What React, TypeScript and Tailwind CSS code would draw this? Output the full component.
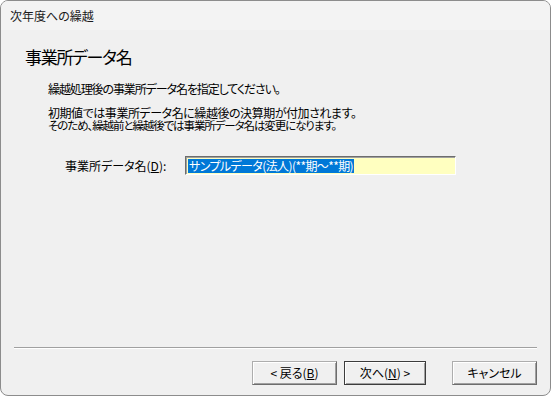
import React from "react";

const font = { fontFamily: '"Noto Sans CJK JP", "Noto Sans", sans-serif' };

function Btn({ children, def }: { children: React.ReactNode; def?: boolean }) {
  return (
    <div
      className={
        "flex h-[24px] items-center justify-center bg-[#f0f0f0] text-[12px] text-black " +
        (def
          ? "w-[82px] border border-[#3c3c3c] shadow-[inset_1px_1px_0_#ffffff,inset_-1px_-1px_0_#a0a0a0]"
          : "w-[85px] border border-[#adadad] border-b-[#6d6d6d] border-r-[#6d6d6d] shadow-[inset_1px_1px_0_#ffffff,inset_-1px_-1px_0_#a0a0a0]")
      }
    >
      {children}
    </div>
  );
}

export default function App() {
  return (
    <div className="w-[551px] h-[396px] bg-white" style={{ ...font, fontFeatureSettings: '"palt"' }}>
      <div className="flex h-full w-full flex-col overflow-hidden rounded-[8px] border border-[#8c8c8c] bg-[#f0f0f0]">
        <div className="flex h-[29px] items-center bg-[#f3f3f3] pl-[9px] text-[12px] text-[#1a1a1a]">
          次年度への繰越
        </div>
        <div className="flex flex-1 flex-col">
          <div className="pl-[24px] pt-[13px] text-[17px] leading-[28px] tracking-[-1.3px] text-black">事業所データ名</div>
          <div className="pl-[47px] pt-[11px] text-[12px] leading-[13px] tracking-[-1.1px] text-black">
            繰越処理後の事業所データ名を指定してください。
          </div>
          <div className="pl-[47px] pt-[12px] text-[12px] leading-[12px] text-black">
            <div className="tracking-[-0.45px]">初期値では事業所データ名に繰越後の決算期が付加されます。</div>
            <div className="text-[11.5px] tracking-[-1.1px]">そのため、繰越前と繰越後では事業所データ名は変更になります。</div>
          </div>
          <div className="mt-[25px] flex items-center">
            <div className="w-[184px] pl-[64px] text-[12px] text-black">
              事業所データ名(<span className="underline">D</span>):
            </div>
            <div className="flex h-[19px] w-[271px] items-center border border-[#6d6d6d] border-b-white border-r-white bg-[#ffffc0] pl-[2px] shadow-[inset_1px_1px_0_#a0a0a0]">
              <span className="bg-[#0078d7] px-[1px] text-[12px] leading-[14px] tracking-[-0.6px] text-white">
                サンプルデータ(法人)(**期～**期)
              </span>
            </div>
          </div>
          <div className="flex-1" />
          <div className="mx-[13px] h-[2px] border-t border-[#a0a0a0] border-b border-b-white" />
          <div className="flex pb-[10px] pl-[251px] pt-[12px]">
            <Btn>&lt; 戻る(<span className="underline">B</span>)</Btn>
            <div className="w-[7px]" />
            <Btn def>次へ(<span className="underline">N</span>) &gt;</Btn>
            <div className="w-[26px]" />
            <Btn>キャンセル</Btn>
          </div>
        </div>
      </div>
    </div>
  );
}
